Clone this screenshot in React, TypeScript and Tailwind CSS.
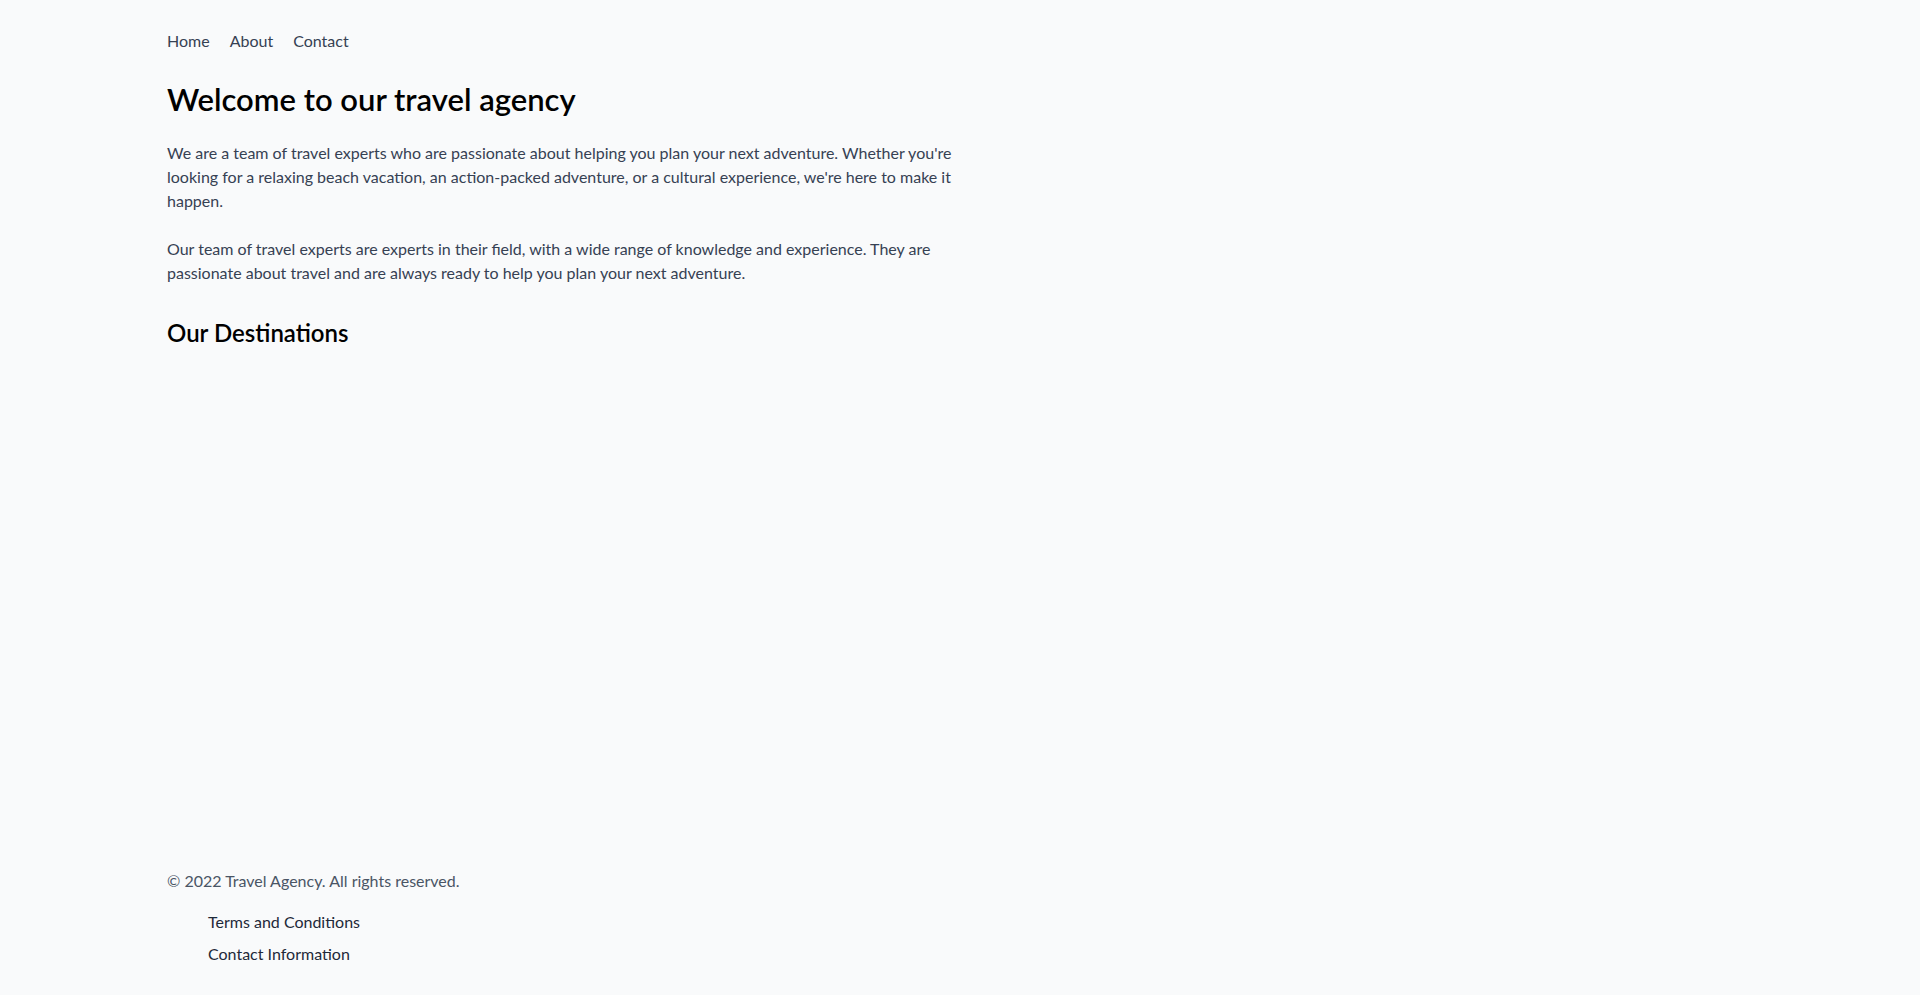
import React from "react";

const navLinks = ["Home", "About", "Contact"];
const footerLinks = ["Terms and Conditions", "Contact Information"];

export default function App() {
  return (
    <div
      className="min-h-screen bg-gray-50 flex flex-col px-[167px] pt-[29px] pb-[29px]"
      style={{ fontFamily: '"Segoe UI", Lato, "Noto Sans", sans-serif' }}
    >
      <header>
        <nav className="flex gap-5 text-base leading-6 text-gray-700">
          {navLinks.map((link) => (
            <a key={link} href="#">
              {link}
            </a>
          ))}
        </nav>
      </header>

      <main className="flex-1 max-w-[800px]">
        <h1 className="mt-[26px] text-[31px] leading-10 font-semibold text-black">
          Welcome to our travel agency
        </h1>
        <p className="mt-[22px] text-base leading-6 text-gray-700">
          We are a team of travel experts who are passionate about helping you plan your next
          adventure. Whether you're looking for a relaxing beach vacation, an action-packed
          adventure, or a cultural experience, we're here to make it happen.
        </p>
        <p className="mt-6 text-base leading-6 text-gray-700">
          Our team of travel experts are experts in their field, with a wide range of knowledge
          and experience. They are passionate about travel and are always ready to help you plan
          your next adventure.
        </p>
        <h2 className="mt-8 text-2xl leading-8 font-semibold text-black">Our Destinations</h2>
      </main>

      <footer>
        <p className="text-base leading-6 text-gray-600">© 2022 Travel Agency. All rights reserved.</p>
        <ul className="mt-[17px] pl-[41px] flex flex-col gap-2 text-base leading-6 text-gray-800">
          {footerLinks.map((link) => (
            <li key={link}>
              <a href="#">{link}</a>
            </li>
          ))}
        </ul>
      </footer>
    </div>
  );
}
